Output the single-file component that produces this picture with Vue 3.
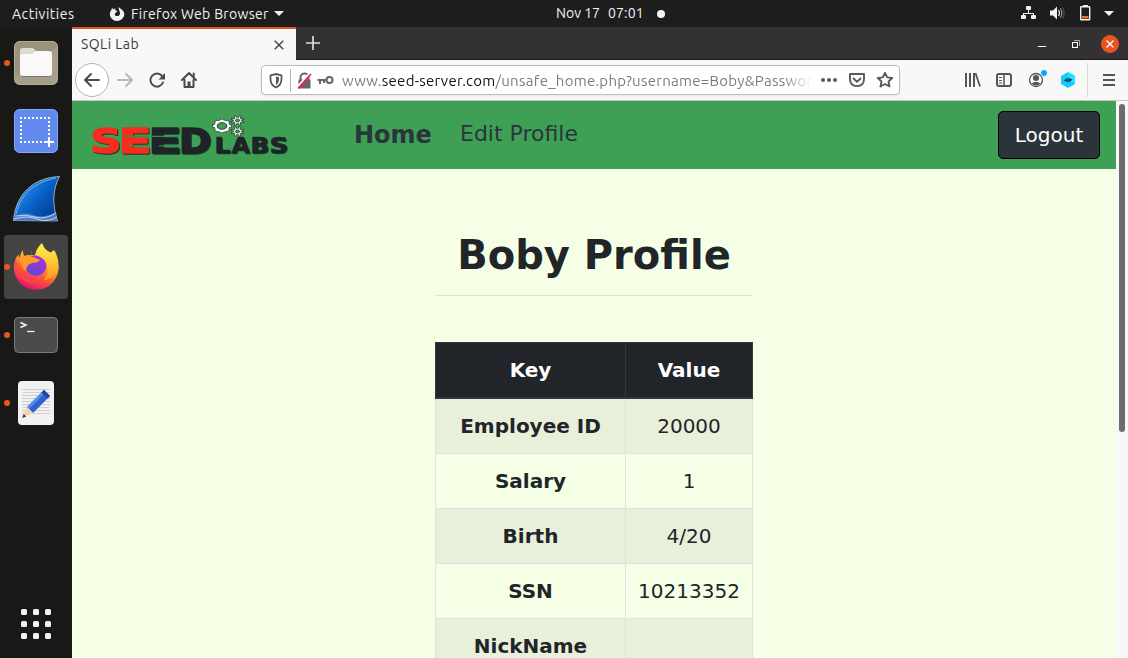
<script setup>
const rows = [
  ['Employee ID', '20000'],
  ['Salary', '1'],
  ['Birth', '4/20'],
  ['SSN', '10213352'],
  ['NickName', ''],
]
const teeth = [0, 45, 90, 135, 180, 225, 270, 315]
const seed = [
  { c: 'S', x: 0.6, s: 1.3, red: true },
  { c: 'E', x: 28.8, s: 1.45, red: true },
  { c: 'E', x: 58.6, s: 1.47, red: false },
  { c: 'D', x: 89, s: 1.18, red: false },
]
</script>

<template>
  <div class="desktop">
    <header class="topbar">
      <span class="activities">Activities</span>
      <svg class="ffmono" width="16" height="16" viewBox="0 0 16 16">
        <path d="M3.2 1.6 4 3.4C5 2.500 6 2.300 7 2.400 6 3.200 6 4 6.600 4.600L8.600 5 7 6.600C6 7.200 5.500 8 6 9.200 7.500 11 11 10 11 7.200 11 5 9.500 4 9.500 1L11.300 2.400C14 4 15.600 6.200 15.300 9A7.300 7 0 0 1 .8 8.500C.7 6 2.500 4.500 3.200 1.600Z" fill="#f2f2f2"/>
      </svg>
      <span class="appname">Firefox Web Browser</span>
      <svg class="caret" width="10" height="5" viewBox="0 0 10 5"><path d="M0 0H10L5 5Z" fill="#f2f2f2"/></svg>
      <span class="date">Nov 17</span>
      <span class="time">07:01</span>
      <i class="notice"></i>
      <svg class="status" width="94" height="17" viewBox="0 0 94 17" fill="#f2f2f2">
        <rect x="5" y="1" width="5" height="4" rx="1"/><path d="M7 5h1v3h5v3h-1V9H3v2H2V8h5z"/>
        <rect x="0" y="10" width="5" height="4" rx="1"/><rect x="10" y="10" width="5" height="4" rx="1"/>
        <path d="M29 5.500h3l4-4v13l-4-4h-3z"/>
        <path d="M37.500 5q2 3 0 6" fill="none" stroke="#e5e5e5" stroke-width="1.200"/>
        <path d="M39.500 3.300q3 4.700 0 9.400" fill="none" stroke="#aaa" stroke-width="1"/>
        <path d="M41.500 2.300q3.200 5.700 0 11.400" fill="none" stroke="#666" stroke-width=".8"/>
        <path d="M62 0h5v2h-5z"/><rect x="59.700" y="1.700" width="9" height="13" rx=".5" fill="none" stroke="#f2f2f2" stroke-width="1.400"/>
        <rect x="61" y="11" width="6.500" height="2.500" fill="#f37329"/>
        <path d="M83 6H93L88 11Z"/>
      </svg>
    </header>

    <div class="workspace">
      <aside class="dock">
        <div class="launcher running">
          <svg width="64" height="64" viewBox="0 0 64 64">
            <rect x="10.500" y="10.500" width="43" height="43" rx="5" fill="#9b927c" stroke="#b5ad98"/>
            <path d="M11 49V46L53 16V49Q53 53 49 53H15Q11 53 11 49Z" fill="#a69e8a"/>
            <path d="M16 20q0-3 3-3h9q2 0 3 2l1 2h4v8H16z" fill="#dedbce"/>
            <path d="M18 23h10l4-3h13q3 0 3 3v19q0 3-3 3H19q-3 0-3-3V25q0-2 2-2z" fill="#faf9f7"/>
            <path d="M18 45.500h28" stroke="#70695b" stroke-width=".8"/>
          </svg>
        </div>
        <div class="launcher">
          <svg width="64" height="64" viewBox="0 0 64 64">
            <rect x="10.500" y="10.500" width="43" height="43" rx="5" fill="#6189ee" stroke="#88a8fa"/>
            <path d="M16 19H46" stroke="#fff" stroke-width="2" stroke-dasharray="2 2"/>
            <path d="M16 43H40" stroke="#fff" stroke-width="2" stroke-dasharray="2 2"/>
            <path d="M17 22V42M45 22V38" stroke="#fff" stroke-width="2" stroke-dasharray="2 2"/>
            <path d="M45 38v10M40 43h10" stroke="#fff" stroke-width="2"/>
          </svg>
        </div>
        <div class="launcher">
          <svg width="64" height="64" viewBox="0 0 64 64">
            <defs><linearGradient id="fin" x1="0" y1="0" x2="1" y2=".8"><stop offset=".2" stop-color="#2c8ce8"/><stop offset=".55" stop-color="#0862c8"/><stop offset="1" stop-color="#003888"/></linearGradient></defs>
            <path d="M9.500 53.500C11 34 23 11 55.500 9.500 50 20 47 34 53.500 54Z" fill="url(#fin)" stroke="#bcc6c8" stroke-width=".8"/>
            <path d="M12 47C16 31 26 16 52 11" fill="none" stroke="#6cb4f2" stroke-width="1"/>
            <path d="M10 51q9-7 19-3t23-3l1.500 8.500H10z" fill="#4d80c9"/>
            <path d="M11 49q10-2 20 1t21-4M10 52q13-4 23 0t20-2" fill="none" stroke="#b5cff0"/>
          </svg>
        </div>
        <div class="launcher running active">
          <svg width="64" height="64" viewBox="0 0 64 64">
            <defs>
              <linearGradient id="fox" x1=".8" y1=".1" x2=".35" y2="1"><stop offset="0" stop-color="#fff044"/><stop offset=".3" stop-color="#ffb02e"/><stop offset=".6" stop-color="#ff5a36"/><stop offset="1" stop-color="#e51177"/></linearGradient>
              <linearGradient id="globe" x1=".8" y1="0" x2=".2" y2="1"><stop offset="0" stop-color="#b22ed8"/><stop offset="1" stop-color="#5b49d8"/></linearGradient>
              <linearGradient id="tail" x1="0" y1="0" x2="0" y2="1"><stop offset="0" stop-color="#fff44a"/><stop offset="1" stop-color="#ff9a20"/></linearGradient>
            </defs>
            <path d="M18.500 15 20 21Q24 19.500 27 20.500L27.500 16 40 14Q54 20 54.500 32A22.300 22.300 0 0 1 9.800 33Q10 24 14.500 19.500L15 23Z" fill="url(#fox)"/>
            <path d="M27.500 15.500 27 20 31 20 36 14 33 12Z" fill="#444443"/>
            <circle cx="32" cy="30.500" r="10.500" fill="url(#globe)"/>
            <path d="M38 8Q40 14 46 18L50 15Q55 22 54.500 33 51 45 39 45 46 39 43 30 40 22 31 20 33 12 38 8Z" fill="url(#tail)"/>
            <path d="M14 24Q20 20 26 21 30 22 36 25 34 28 28 28 22 30 22 36 17 33 17 27Z" fill="#ff9b28"/>
            <path d="M12 24Q14 36 23 43 32 49 42 42 35 52 24 48 12 42 10 33Z" fill="#ff4740" opacity=".75"/>
          </svg>
        </div>
        <div class="launcher running">
          <svg width="64" height="64" viewBox="0 0 64 64">
            <rect x="10.500" y="14.500" width="43" height="35" rx="4" fill="#4b4b4b" stroke="#7c7c7c"/>
            <path d="M16.500 19.500 22 22l-5.500 2.500" fill="none" stroke="#f4f4f4" stroke-width="1.500"/>
            <path d="M23 28.500h7.500" stroke="#f4f4f4" stroke-width="1.300"/>
          </svg>
        </div>
        <div class="launcher running">
          <svg width="64" height="64" viewBox="0 0 64 64">
            <rect x="14" y="10" width="36" height="44" rx="4" fill="#f1f1f1"/>
            <path d="M18 18.500H46M18 21.500H46M18 24.500H46M18 27.500H46M18 30.500H46M18 33.500H46M18 36.500H46M18 39.500H46M18 42.500H46" stroke="#cfcfcf"/>
            <path d="M40 19 23 36l6 6 17-17z" fill="#2e61d1"/><path d="M40 19 23 36l2 2 17-17z" fill="#578bea"/>
            <path d="m40 19 6 6-2.500 2.500-6-6z" fill="#1c47a3"/><path d="m23 36-4.500 10.500L29 42z" fill="#f6d3ae"/><path d="m19.700 43-1.500 4 4-1.500z" fill="#333"/>
          </svg>
        </div>
        <div class="apps"><i v-for="n in 9" :key="n"></i></div>
      </aside>

      <main class="browser">
        <div class="tabs">
          <div class="tab"><span>SQLi Lab</span>
            <svg width="10" height="10" viewBox="0 0 10 10"><path d="m.7.7 8.600 8.600m0-8.600L.7 9.300" stroke="#4a4a4a" stroke-width="1.500"/></svg>
          </div>
          <svg class="plus" width="14" height="14" viewBox="0 0 14 14"><path d="M7 0v14M0 7h14" stroke="#dedede" stroke-width="1.700"/></svg>
          <svg class="winbtns" width="81" height="19" viewBox="0 0 81 19">
            <path d="M0 12.500h8" stroke="#fff"/><rect x="34.500" y="8.500" width="5" height="5" fill="none" stroke="#fff"/><path d="M36 6.500h5.500V12" fill="none" stroke="#aaa"/>
            <circle cx="72" cy="10" r="9" fill="#e95420"/><path d="m68.500 6.500 7 7m0-7-7 7" stroke="#fff" stroke-width="1.300"/>
          </svg>
        </div>

        <div class="toolbar">
          <svg class="nav" width="126" height="36" viewBox="0 0 126 36" fill="none" stroke="#4b4b4b" stroke-width="2" stroke-linecap="round" stroke-linejoin="round">
            <circle cx="17" cy="18" r="16.500" fill="#fff" stroke="#b4b4b4" stroke-width="1"/>
            <path d="M24 18H10m6-6-6 6 6 6"/>
            <path d="M43 18h14m-6-6 6 6-6 6" stroke="#b8b8b8"/>
            <path d="M88 20.500a6.500 6.500 0 1 1-1-6.500"/><path d="M90 11v6.500h-6.500z" fill="#4b4b4b" stroke="none"/>
            <path d="m107 18 7-7 7 7M109.500 18v7h9v-7" /><path d="M112.500 19.500h3V25h-3z" fill="#4b4b4b" stroke="none"/><path d="M118.700 11.500v3"/>
          </svg>
          <div class="address">
            <svg width="72" height="26" viewBox="0 0 72 26" fill="none">
              <path d="M8.500 8.300 14 7l5.500 1.300V12q0 6-5.500 8.500Q8.500 18 8.500 12Z" stroke="#5a5a5a" stroke-width="1.800" stroke-linejoin="round"/>
              <path d="M14 9.500v8.500q3-2 3-6v-1.800z" fill="#5a5a5a"/>
              <path d="M28.500 2v23" stroke="#b6b6b6"/>
              <path d="M38.500 14V10.500a4 4 0 0 1 8 0V14" stroke="#656565" stroke-width="2"/><rect x="36.500" y="12.500" width="12" height="9" rx="1" fill="#656565"/>
              <path d="M35 20.500 48 6" stroke="#fff" stroke-width="2"/><path d="M36 21.500 49 7" stroke="#ff174d" stroke-width="1.800"/>
              <circle cx="67.500" cy="13" r="3" stroke="#656565" stroke-width="2"/><path d="M55.500 13h9M58 13v4M62 13v3" stroke="#656565" stroke-width="2"/>
            </svg>
            <div class="url"><span class="www">www.</span><span class="host">seed-server.com</span><span class="path">/unsafe_home.php?username=Boby&amp;Passwor</span></div>
            <svg class="actions" width="76" height="20" viewBox="0 0 76 20" fill="none" stroke="#5a5a5a" stroke-width="1.900" stroke-linejoin="round">
              <g fill="#5a5a5a" stroke="none"><circle cx="3" cy="10" r="2"/><circle cx="9" cy="10" r="2"/><circle cx="15" cy="10" r="2"/></g>
              <path d="M30 4h14v5q0 7-7 7t-7-7z"/><path d="m33.500 8.500 3.500 3.300 3.500-3.300" stroke-linecap="round"/>
              <path d="m65 2.800 2.200 4.600 5 .6-3.700 3.500 1 5-4.500-2.500-4.500 2.500 1-5L57.800 8l5-.6z"/>
            </svg>
          </div>
          <svg class="tools" width="154" height="36" viewBox="0 0 154 36" fill="none" stroke="#555" stroke-width="2">
            <path d="M2 11v14M6 11v14M10 11v14" stroke-width="2"/><path d="m11.500 11 4.500 13.500" stroke-width="1.800"/>
            <rect x="33" y="12" width="14" height="12" rx="2"/><path d="M40 12v12" stroke-width="1.500"/><path d="M35 15.500h3M35 18.500h3M35 21h3" stroke-width="1"/>
            <circle cx="72" cy="18" r="6.500" stroke-width="1.300"/><circle cx="72" cy="16" r="3" fill="#555" stroke="none"/><path d="M67.500 21.500q4.500-3.500 9 0-4.500 4-9 0" fill="#555" stroke="none"/>
            <circle cx="80" cy="11" r="3.200" fill="#00a8ff" stroke="#f8f8f8" stroke-width=".5"/>
            <path d="m104 10 7 4v8l-7 4-7-4v-8z" fill="#12caff" stroke="none"/><path d="m104 10 7 4v8l-7-4z" fill="#19e4ff" stroke="none"/><path d="m99.500 18.800 3.500-3v2l2-2.800v1.200l3.500 1.300-3.500 3v-2l-2 2.500v-1.200z" fill="#174656" stroke="none"/>
            <path d="M123.500 1v34" stroke="#d8d8d8" stroke-width="1"/>
            <path d="M139 13h12M139 18h12M139 23h12"/>
          </svg>
        </div>

        <div class="viewport">
          <div class="page">
            <nav class="navbar">
              <svg class="logo" width="202" height="46" viewBox="0 0 202 46">
                <g class="seed">
                  <text v-for="(l, i) in seed" :key="i" :class="{ red: l.red }" :transform="`translate(${l.x} 40.800) scale(${l.s} 1)`">{{ l.c }}</text>
                </g>
                <path d="M33 24.300H60M62 24.300H90M39 33.800H60M69 33.800H90" stroke="#36904b" stroke-width="1.300"/>
                <g class="labs">
                  <text transform="translate(124.500 40.500) scale(1.200 1)">L</text>
                  <text transform="translate(141.500 40.500) scale(1.130 1)">A</text>
                  <text transform="translate(160.500 40.500) scale(1.170 1)">B</text>
                  <text transform="translate(179.500 40.500) scale(1.240 1)">S</text>
                </g>
                <g transform="translate(132 14)">
                  <rect v-for="a in teeth" :key="a" x="-1.700" y="-8" width="3.400" height="4" fill="#fff" stroke="#28382d" stroke-width=".7" :transform="`scale(1.150 .85) rotate(${a})`"/>
                  <ellipse rx="6.200" ry="4.600" fill="none" stroke="#fff" stroke-width="2.500"/>
                  <ellipse rx="4.800" ry="3.400" fill="none" stroke="#28382d" stroke-width=".9"/>
                </g>
                <g v-for="y in [8.500, 19.500]" :key="y" :transform="`translate(147.500 ${y})`">
                  <rect v-for="a in teeth" :key="a" x="-.9" y="-6" width="1.800" height="3.500" fill="#fff" stroke="#26352b" stroke-width=".8" :transform="`scale(1.100 .8) rotate(${a + 22})`"/>
                  <ellipse rx="2.900" ry="2.200" fill="#3ea055" stroke="#fff" stroke-width="1.100"/><ellipse rx="2" ry="1.500" fill="#3ea055" stroke="#26352b" stroke-width=".6"/>
                </g>
              </svg>
              <a class="home">Home</a>
              <a class="edit">Edit Profile</a>
              <button>Logout</button>
            </nav>
            <section class="profile">
              <h1>Boby Profile</h1>
              <hr>
              <table>
                <thead><tr><th>Key</th><th>Value</th></tr></thead>
                <tbody><tr v-for="r in rows" :key="r[0]"><th>{{ r[0] }}</th><td>{{ r[1] }}</td></tr></tbody>
              </table>
            </section>
          </div>
          <div class="scroll"><i></i></div>
        </div>
      </main>
    </div>
  </div>
</template>

<style>
html, body { margin: 0; overflow: hidden; }
</style>

<style scoped>
* { box-sizing: border-box; }
svg { display: block; flex: none; }
.desktop { width: 1128px; height: 658px; overflow: hidden; display: flex; flex-direction: column; font-family: Ubuntu, "Noto Sans", sans-serif; }
.topbar { height: 27px; flex: none; background: #1d1d1d; color: #f2f2f2; display: flex; align-items: center; font-size: 14px; line-height: 26px; white-space: pre; }
.topbar span { flex: none; }
.activities { width: 97px; padding-left: 12px; letter-spacing: .52px; }
.ffmono { margin-left: 12px; }
.appname { width: 143px; margin-left: 6px; letter-spacing: .32px; }
.date { width: 52px; margin-left: 272px; }
.time { width: 49px; letter-spacing: .15px; }
.date, .time { position: relative; top: -1px; }
.notice { width: 8px; height: 8px; border-radius: 50%; background: #f4f4f4; flex: none; }
.status { margin-left: 356px; }
.workspace { display: flex; flex: 1; min-height: 0; }
.dock { width: 72px; flex: none; background: #181816; padding: 4px; display: flex; flex-direction: column; gap: 4px; }
.launcher { width: 64px; height: 64px; flex: none; position: relative; border-radius: 4px; }
.active { background: #444443; }
.running::before { content: ""; position: absolute; left: 0; top: 29px; width: 6px; height: 6px; border-radius: 50%; background: #e95420; }
.apps { display: grid; grid-template-columns: repeat(3, 6px); gap: 6px; margin: auto 0 15px 17px; }
.apps i { height: 6px; background: #f2f2f0; border-radius: 1.500px; }
.browser { width: 1056px; display: flex; flex-direction: column; }
.tabs { height: 33px; flex: none; background: #343132; border-bottom: 1px solid #1c1b1c; display: flex; align-items: flex-start; }
.tab { width: 224px; height: 33px; flex: none; background: #f8f8f8; border-top: 2px solid #e95420; display: flex; align-items: center; justify-content: space-between; padding: 0 12px 0 9px; font-size: 14px; color: #38383d; }
.tab span { letter-spacing: .45px; line-height: 20px; margin-top: -2px; }
.plus { margin: 9px 0 0 10px; }
.winbtns { margin: 7px 9px 0 auto; }
.toolbar { height: 41px; flex: none; background: #f8f8f8; border-bottom: 1px solid #c6c6c6; display: flex; align-items: center; padding-left: 3px; }
.address { margin-left: 60px; width: 639px; height: 30px; border: 1px solid #bcbcbc; border-radius: 4px; background: #fff; display: flex; align-items: center; flex: none; box-shadow: 0 1px 3px #0001; }
.url { margin-left: 8px; width: 470px; height: 26px; line-height: 27px; white-space: nowrap; font-size: 15px; letter-spacing: .26px; color: #7c7c7c; display: flex; -webkit-mask-image: linear-gradient(to right, #000 94%, transparent); mask-image: linear-gradient(to right, #000 94%, transparent); }
.host { color: #111; }
.actions { margin-left: 8px; }
.tools { margin-left: 64px; }
.viewport { flex: 1; display: flex; min-height: 0; }
.page { width: 1044px; background: #f4ffe6; font-family: "DejaVu Sans", sans-serif; color: #212529; overflow: hidden; }
.navbar { height: 68px; background: #3ea055; display: flex; align-items: center; font-size: 22px; color: #2c343b; }
.logo { margin-left: 18px; overflow: visible; }
.seed, .labs { filter: drop-shadow(1px 1px .5px #163b20); }
.seed text { font: bold 33px "DejaVu Sans", sans-serif; fill: #20242a; stroke: #20242a; stroke-width: 1.600; stroke-linejoin: round; }
.seed .red { fill: #f82c1e; stroke: #f82c1e; }
.labs text { font: bold 21px "DejaVu Sans", sans-serif; fill: #20242a; stroke: #20242a; stroke-width: .600; stroke-linejoin: round; }
.home { width: 78px; margin-left: 62px; font-size: 24px; font-weight: bold; }
.edit { margin-left: 28px; margin-top: -3px; }
button { margin-left: auto; margin-right: 16px; width: 102px; height: 48px; border: 1px solid #000; border-radius: 5px; background: #2c343b; color: #fff; font: 20px "DejaVu Sans", sans-serif; padding: 0; }
.profile { width: 318px; margin: 61px auto 0 363px; }
h1 { margin: 0; font-size: 40px; line-height: 50px; text-align: center; white-space: nowrap; }
hr { border: 0; border-top: 1px solid #dbe6cf; margin: 15px 0 46px; }
table { width: 318px; table-layout: fixed; border-collapse: collapse; font-size: 20px; line-height: 30px; text-align: center; }
th, td { height: 55px; padding: 12px 0; border: 1px solid #dee2e6; }
th:first-child { width: 190px; }
thead th { height: 55px; padding-bottom: 11px; background: #212529; color: #fff; border-color: #32383e; border-bottom-width: 2px; }
tbody tr:nth-child(odd) { background: #e8f0da; }
.scroll { width: 12px; background: #f8f8f8; padding: 3px 3px 0; }
.scroll i { display: block; width: 6px; height: 328px; border-radius: 3px; background: #6c6c6c; }
</style>
